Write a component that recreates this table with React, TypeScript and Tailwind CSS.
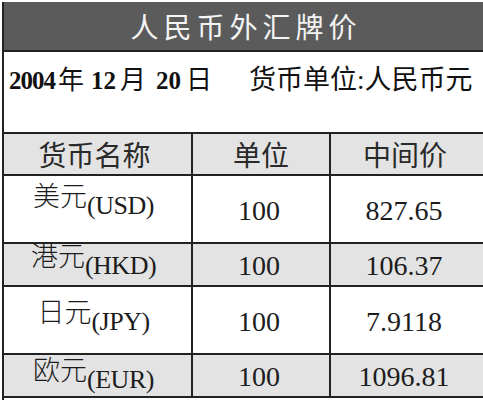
import React from "react";

type Row = {
  name: string;
  code: string;
  unit: string;
  mid: string;
  rowCls: string;
  nameCls: string;
};

const rows: Row[] = [
  { name: "美元", code: "(USD)", unit: "100", mid: "827.65", rowCls: "h-[68px] bg-white", nameCls: "pb-[19px]" },
  { name: "港元", code: "(HKD)", unit: "100", mid: "106.37", rowCls: "h-[43px] bg-[#e3e3e3]", nameCls: "pb-[9px]" },
  { name: "日元", code: "(JPY)", unit: "100", mid: "7.9118", rowCls: "h-[68px] bg-white", nameCls: "pb-[9px]" },
  { name: "欧元", code: "(EUR)", unit: "100", mid: "1096.81", rowCls: "h-[43px] bg-[#e3e3e3]", nameCls: "pb-[3px]" },
];

export default function App() {
  return (
    <div className="w-[483px] h-[400px] bg-white overflow-hidden pt-[2px] pl-[2px]">
      <div className="border-l-2 border-[#222] h-full flex flex-col">
        {/* Title band */}
        <div className="h-[50px] shrink-0 bg-[#5b5b5b] border-b-2 border-[#222] flex items-center justify-center text-[#f4f4f4] text-[28px] leading-none tracking-[5px] pl-[5px] font-['Noto_Sans_CJK_SC',sans-serif]">
          人民币外汇牌价
        </div>

        {/* Date line */}
        <div className="h-[80px] shrink-0 flex items-baseline pt-[12px] text-[#111] leading-none">
          <span className="ml-[5px] text-[25px] font-bold tracking-[-1px] font-['Liberation_Serif',serif]">2004</span>
          <span className="ml-[3px] text-[26px] font-['Noto_Sans_CJK_SC',sans-serif]">年</span>
          <span className="ml-[7px] text-[25px] font-bold font-['Liberation_Serif',serif]">12</span>
          <span className="ml-[4px] text-[26px] font-['Noto_Sans_CJK_SC',sans-serif]">月</span>
          <span className="ml-[10px] text-[25px] font-bold font-['Liberation_Serif',serif]">20</span>
          <span className="ml-[5px] text-[26px] font-['Noto_Sans_CJK_SC',sans-serif]">日</span>
          <span className="ml-[37px] text-[27px] whitespace-nowrap font-['Noto_Sans_CJK_SC',sans-serif]">
            货币单位<span className="font-['Liberation_Serif',serif]">:</span>人民币元
          </span>
        </div>

        {/* Table */}
        <div className="border-t-2 border-[#222] flex flex-col">
          <div className="h-[42px] bg-[#e3e3e3] border-b-2 border-[#222] flex text-[#2a2a2a] text-[28px] leading-none font-['Noto_Sans_CJK_SC',sans-serif]">
            <div className="w-[189px] border-r-2 border-[#222] flex items-center justify-center pr-[6px]">货币名称</div>
            <div className="w-[138px] border-r-2 border-[#222] flex items-center justify-center">单位</div>
            <div className="flex-1 flex items-center justify-center pr-[4px]">中间价</div>
          </div>
          {rows.map((r) => (
            <div key={r.code} className={`${r.rowCls} border-b-2 border-[#222] flex text-[#1c1c1c] leading-none`}>
              <div className={`w-[189px] border-r-2 border-[#222] flex items-center justify-center pr-[8px] ${r.nameCls}`}>
                <div className="flex items-start whitespace-nowrap">
                  <span className="text-[27px] font-light font-['Noto_Sans_CJK_SC',sans-serif]">{r.name}</span>
                  <span className="text-[26px] mt-[12px] tracking-[-0.5px] font-['Liberation_Serif',serif]">{r.code}</span>
                </div>
              </div>
              <div className="w-[138px] border-r-2 border-[#222] flex items-center justify-center pt-[3px] pr-[4px] text-[28px] font-['Liberation_Serif',serif]">
                {r.unit}
              </div>
              <div className="flex-1 flex items-center justify-center pt-[3px] pr-[6px] text-[28px] font-['Liberation_Serif',serif]">
                {r.mid}
              </div>
            </div>
          ))}
        </div>
      </div>
    </div>
  );
}
